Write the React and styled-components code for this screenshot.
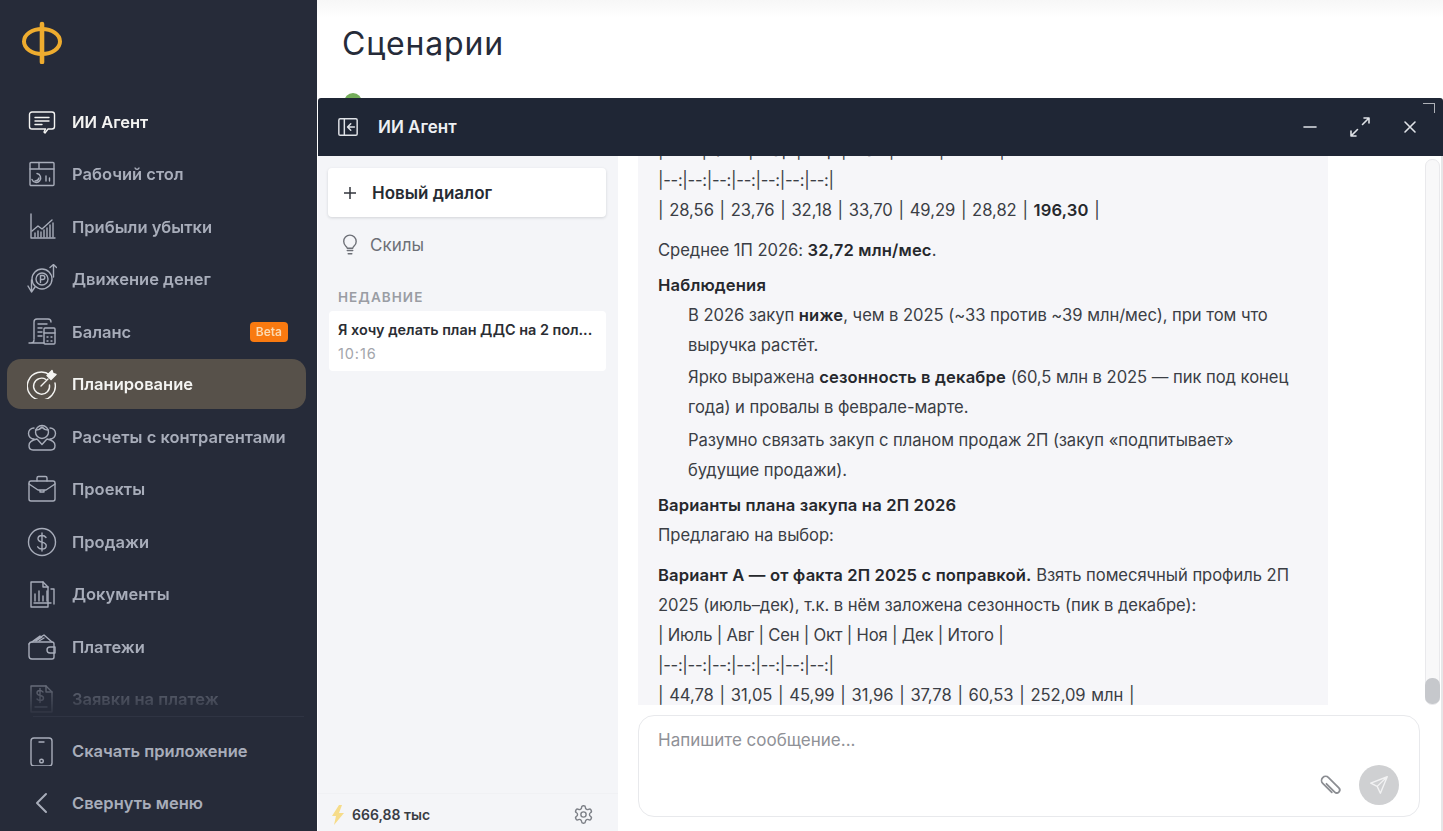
import React from 'react';
import styled, { createGlobalStyle } from 'styled-components';

const Global = createGlobalStyle`
  html, body { margin: 0; padding: 0; height: 100%; }
  body { font-family: "Inter", "Noto Sans", sans-serif; background: #fff; overflow: hidden; }
  #root { height: 100vh; }
  * { box-sizing: border-box; }
`;

const Page = styled.div`
  display: flex;
  height: 831px;
  width: 1443px;
  overflow: hidden;
`;

const Sidebar = styled.aside`
  flex: 0 0 317px;
  display: flex;
  flex-direction: column;
  background: #262b39;
  padding: 0 11px 0 7px;
`;

const LogoRow = styled.div`
  height: 95.5px;
  flex: none;
  padding: 20px 0 0 13px;
`;

const Nav = styled.nav`
  flex: 1;
  min-height: 0;
  overflow: hidden;
  display: flex;
  flex-direction: column;
  mask-image: linear-gradient(to bottom, #000 0, #000 565px, rgba(0,0,0,0.4) 595px, rgba(0,0,0,0.05) 619px);
`;

const Divider = styled.div`
  height: 1px;
  background: #2f3443;
  flex: none;
  margin: 0 2px 0 26px;
`;

const Footer = styled.div`
  flex: none;
  display: flex;
  flex-direction: column;
  padding: 7.5px 0 1.5px;
`;

const Item = styled.div`
  flex: none;
  height: 52.5px;
  display: flex;
  align-items: center;
  padding-left: 20px;
  padding-right: 18px;
  gap: 15px;
  border-radius: 14px;
  color: ${p => (p.$active ? '#f4f4f2' : '#a8adba')};
  font-size: 16.5px;
  font-weight: 600;
  white-space: nowrap;
  background: ${p => (p.$selected ? '#57514a' : 'transparent')};
  ${p => p.$selected && 'height: 50px; margin: 1px 0 1.5px;'}
`;

const NavIcon = styled.svg`
  width: 30px;
  height: 30px;
  flex: none;
  fill: none;
  stroke: currentColor;
  stroke-width: 1.4;
  stroke-linecap: round;
  stroke-linejoin: round;
`;

const Beta = styled.span`
  margin-left: auto;
  background: #f97a10;
  color: #fbd9b0;
  font-size: 12px;
  font-weight: 600;
  padding: 3px 6px;
  border-radius: 4px;
  line-height: 14px;
`;

const Main = styled.main`
  flex: 1;
  position: relative;
  min-width: 0;
  background: linear-gradient(#f7f7f7 0, #fff 18px);
  padding: 25px 0 0 25px;
`;

const Title = styled.h1`
  margin: 0;
  font-size: 32px;
  line-height: 38px;
  font-weight: 400;
  color: #262b39;
  letter-spacing: 0.8px;
`;

const GreenDot = styled.div`
  width: 18px;
  height: 18px;
  margin: 30px 0 0 2px;
  border-radius: 50%;
  background: #74ad5a;
`;

const Modal = styled.section`
  position: absolute;
  top: 98px;
  left: 1px;
  right: 0;
  bottom: 0;
  display: flex;
  flex-direction: column;
  background: #fff;
`;

const ModalHeader = styled.header`
  flex: none;
  height: 58px;
  background: #1f2635;
  border-radius: 3px 3px 0 0;
  display: flex;
  align-items: center;
  padding: 0 21px 0 19px;
  color: #eef0f3;
  position: relative;
`;

const HeaderTitle = styled.div`
  margin-left: 19px;
  font-size: 17px;
  font-weight: 600;
  flex: 1;
`;

const HeaderIcon = styled.svg`
  width: ${p => p.$size || 24}px;
  height: ${p => p.$size || 24}px;
  fill: none;
  stroke: #dfe2e7;
  stroke-width: 1.6;
  stroke-linecap: round;
  stroke-linejoin: round;
  flex: none;
`;

const HeaderActions = styled.div`
  display: flex;
  align-items: center;
  gap: 26px;
`;

const Corner = styled.span`
  position: absolute;
  top: 5px;
  right: 8px;
  width: 12px;
  height: 10px;
  border-top: 1.5px solid #aeb1b8;
  border-right: 1.5px solid #aeb1b8;
`;

const ModalBody = styled.div`
  flex: 1;
  min-height: 0;
  display: flex;
`;

const Side = styled.aside`
  flex: 0 0 300px;
  background: #f4f5f8;
  display: flex;
  flex-direction: column;
  padding: 12px 12px 0 10px;
`;

const NewDialog = styled.button`
  height: 49px;
  flex: none;
  border: 0;
  background: #fff;
  border-radius: 4px;
  box-shadow: 0 1px 3px rgba(30, 35, 50, 0.16);
  display: flex;
  align-items: center;
  gap: 15px;
  padding: 0 0 0 15px;
  font-family: inherit;
  font-size: 17px;
  font-weight: 600;
  color: #262b33;
`;

const Skills = styled.div`
  display: flex;
  align-items: center;
  gap: 9px;
  margin-top: 13px;
  height: 30px;
  padding-left: 11px;
  color: #6d7077;
  font-size: 17px;
`;

const RecentLabel = styled.div`
  margin-top: 27px;
  padding-left: 10px;
  font-size: 13.5px;
  line-height: 20px;
  font-weight: 600;
  letter-spacing: 1.05px;
  color: #9a9da4;
`;

const ChatCard = styled.div`
  margin-top: 4px;
  height: 60px;
  background: #fff;
  border-radius: 4px;
  padding: 9px 9px;
  margin-left: 1px;
`;

const ChatTitle = styled.div`
  font-size: 14.4px;
  line-height: 20px;
  font-weight: 600;
  color: #2a2d33;
  white-space: nowrap;
  overflow: hidden;
`;

const ChatTime = styled.div`
  font-size: 14.5px;
  line-height: 27px;
  letter-spacing: 0.9px;
  color: #a3a5ab;
`;

const SideFooter = styled.div`
  margin: auto -12px 0 -10px;
  height: 38px;
  border-top: 1px solid #f0f1f4;
  display: flex;
  align-items: center;
  padding: 4px 24px 0 13px;
  gap: 7px;
  font-size: 14px;
  font-weight: 600;
  color: #3a3d44;
`;

const Gear = styled.svg`
  margin-left: auto;
  width: 21px;
  height: 21px;
  fill: none;
  stroke: #7d8087;
  stroke-width: 1.6;
  stroke-linecap: round;
  stroke-linejoin: round;
`;

const Chat = styled.div`
  flex: 1;
  min-width: 0;
  position: relative;
  display: flex;
  flex-direction: column;
  padding: 0 23px 14px 20px;
`;

const Messages = styled.div`
  flex: 1;
  min-height: 0;
  overflow: hidden;
  display: flex;
  flex-direction: column;
  justify-content: flex-end;
`;

const Bubble = styled.div`
  flex: none;
  width: 690px;
  margin-bottom: -5px;
  background: #f6f6f9;
  padding: 0 20px;
  color: #3b3e45;
  font-size: 16.6px;
  line-height: 30px;
  letter-spacing: -0.05px;
`;

const Para = styled.p`
  margin: ${p => p.$top ?? 10}px 0 0;
`;

const Strong = styled.b`
  font-weight: 600;
  color: #26282d;
  letter-spacing: 0.15px;
`;

const TableRow = styled.span`
  word-spacing: 1.1px;
`;

const HeadRow = styled.span`
  letter-spacing: -0.2px;
`;

const Separator = styled.span`
  letter-spacing: -0.3px;
`;

const Indented = styled.div`
  padding-left: 30px;
  margin-top: ${p => p.$top ?? 0}px;
`;

const Composer = styled.div`
  flex: none;
  margin-top: 10px;
  height: 102px;
  border: 1px solid #e8e9ec;
  border-radius: 16px;
  position: relative;
  padding: 13px 19px;
  color: #8f9197;
  font-size: 17px;
  line-height: 22px;
`;

const Controls = styled.div`
  position: absolute;
  right: 20px;
  bottom: 11px;
  display: flex;
  align-items: center;
  gap: 14px;
`;

const SendButton = styled.div`
  width: 40px;
  height: 40px;
  border-radius: 50%;
  background: #cfd0d2;
  display: flex;
  align-items: center;
  justify-content: center;
`;

const Track = styled.div`
  position: absolute;
  top: 3px;
  bottom: 126px;
  right: 3px;
  width: 15px;
  border-radius: 7px;
  border: 1px solid #e9e9ec;
  background: #f8f8f9;
  display: flex;
  flex-direction: column;
  justify-content: flex-end;
`;

const Thumb = styled.div`
  height: 26px;
  margin: 0 -1px;
  border-radius: 7px;
  background: #c6c8cc;
`;

const Edge = styled.div`
  position: absolute;
  top: 0;
  bottom: 0;
  right: 0;
  width: 2px;
  background: #e6e6e8;
`;

const icons = {
  agent: <><path d="M5 5h20a2.5 2.5 0 0 1 2.5 2.5v12a2.5 2.5 0 0 1-2.5 2.5h-4l-3 4-1-1 1.500-3H5a2.500 2.500 0 0 1-2.500-2.500v-12A2.500 2.500 0 0 1 5 5z" /><path d="M8 10.500h14M8 14h14M8 17.500h7" /></>,
  desk: <><rect x="3" y="3.500" width="24" height="23" rx="1" /><path d="M3 10h24M12 3.500V10M10 14.500a4.500 4.500 0 1 1-5 6M19 22v-5M22.500 22v-3" /><path d="M8 22a4 4 0 0 0 4-3" /></>,
  profit: <><path d="M4 2v24h24" /><path d="M5 19l6-5 4 3 10-9" /><path d="M8 25v-4M11 25v-6M14 25v-5M17 25v-7M20 25v-9M23 25v-12M26 25V11" /></>,
  money: <><circle cx="15" cy="15" r="10" /><circle cx="15" cy="15" r="6" /><path d="M13.500 18.500v-7h2.300a2 2 0 0 1 0 4h-2.300" /><path d="M23 3.500l3.500-3 3 3M26.500 1v12M1 22l3.500 6 3.500-5M4.500 28V16" /></>,
  balance: <><path d="M7 22V5a3 3 0 0 1 3-3h11a3 3 0 0 1 3 3" /><path d="M2 26h15M4 26a3 3 0 0 0 3-3" /><path d="M11 7h9M11 11h4M11 15h4M11 19h4" /><rect x="17" y="11" width="11" height="16" rx="1" /><path d="M17 16h11M20 20h1M24 20h1M20 24h1M24 24h1" /></>,
  plan: <><path d="M23 6a14 14 0 1 0 5 8" /><path d="M19 10.500a8 8 0 1 0 3.500 5.500" /><path d="M14 17l7-7" /><path d="M20 6.500l5-5 1 3 3 1-5 5z" fill="currentColor" /></>,
  people: <><circle cx="15" cy="10" r="6.500" /><path d="M8.500 8c3 0 5-1 6.500-3 1.500 2 3.500 3 6.500 3M7 17a4.500 4.500 0 0 1 0-11M23 17a4.500 4.500 0 0 0 0-11M10 17c-5 1-8 3-8 6.500C2 26 3.500 28 6 28h18c2.500 0 4-2 4-4.500 0-3.500-3-5.500-8-6.500M10.500 17.500l4.500 5 4.500-5" /></>,
  case: <><rect x="2" y="7" width="26" height="20" rx="2" /><path d="M10 7V4a1.500 1.500 0 0 1 1.500-1.500h7A1.500 1.500 0 0 1 20 4v3M2 10l9 6h8l9-6M13 16v2h4v-2" /></>,
  dollar: <><circle cx="15" cy="15" r="13.500" /><path d="M19 10.500c-1-1.500-2.500-2-4-2-2.500 0-4 1.500-4 3.200 0 4.600 8.200 2.300 8.200 7 0 2-1.700 3.300-4.200 3.300-1.700 0-3.300-.7-4.300-2.200M15 6v18" /></>,
  docs: <><path d="M4 3h12l5 5v20H4z" /><path d="M16 3v5h5" /><path d="M8 22v-7M12 22V12M16 22v-5M7 24h17M24 10h3v15M20 12v10" /></>,
  wallet: <><path d="M5 10h20a2 2 0 0 1 2 2v13a2 2 0 0 1-2 2H5a3 3 0 0 1-3-3V12" /><path d="M2 12a3 3 0 0 1 3-2l12-7 8 7M6 9l7-5M9 9l6-4M12 9l5-3" /><path d="M28 15h-5a3 3 0 0 0 0 6h5z" /></>,
  request: <><path d="M4 2h15l6 6v20H4z" /><path d="M19 2v6h6" /><path d="M16 8c-1-1-2-1.500-3-1.500-2 0-3 1-3 2.500 0 3.500 6.500 1.500 6.500 5 0 1.500-1.300 2.500-3.300 2.500-1.200 0-2.400-.5-3.200-1.500M13 4.500v14M8 23h12" /></>,
  phone: <><rect x="4" y="2" width="21" height="28" rx="3" /><path d="M12 6h5" /><circle cx="14.500" cy="25" r="1.800" /></>,
  back: <path d="M19 6l-9 9 9 9" strokeWidth="2" />,
};

const items = [
  ['agent', 'ИИ Агент', { active: true }],
  ['desk', 'Рабочий стол'],
  ['profit', 'Прибыли убытки'],
  ['money', 'Движение денег'],
  ['balance', 'Баланс', { beta: true }],
  ['plan', 'Планирование', { active: true, selected: true }],
  ['people', 'Расчеты с контрагентами'],
  ['case', 'Проекты'],
  ['dollar', 'Продажи'],
  ['docs', 'Документы'],
  ['wallet', 'Платежи'],
  ['request', 'Заявки на платеж'],
];

function NavRow({ icon, label, active, selected, beta }) {
  return (
    <Item $active={active} $selected={selected}>
      <NavIcon viewBox="0 0 30 30">{icons[icon]}</NavIcon>
      {label}
      {beta && <Beta>Beta</Beta>}
    </Item>
  );
}

export default function App() {
  return (
    <Page>
      <Global />
      <Sidebar>
        <LogoRow>
          <svg width="44" height="44" viewBox="0 0 44 44" fill="none" stroke="#eeac2f">
            <ellipse cx="22" cy="21.500" rx="18" ry="12.500" strokeWidth="4" />
            <path d="M22 4v38" strokeWidth="4.600" strokeLinecap="round" />
          </svg>
        </LogoRow>
        <Nav>
          {items.map(([icon, label, opts]) => (
            <NavRow key={label} icon={icon} label={label} {...opts} />
          ))}
        </Nav>
        <Divider />
        <Footer>
          <NavRow icon="phone" label="Скачать приложение" />
          <NavRow icon="back" label="Свернуть меню" />
        </Footer>
      </Sidebar>
      <Main>
        <Title>Сценарии</Title>
        <GreenDot />
        <Modal>
          <ModalHeader>
            <HeaderIcon viewBox="0 0 24 24" $size={22}>
              <rect x="2" y="3" width="20" height="18" rx="1.500" />
              <path d="M8 3v18M19 12h-7M15 8.500L11.500 12l3.500 3.500" />
            </HeaderIcon>
            <HeaderTitle>ИИ Агент</HeaderTitle>
            <HeaderActions>
              <HeaderIcon viewBox="0 0 24 24"><path d="M6 12h12" /></HeaderIcon>
              <HeaderIcon viewBox="0 0 24 24">
                <path d="M14.500 9.500L21 3M16 3h5v5M9.500 14.500L3 21M3 16v5h5" />
              </HeaderIcon>
              <HeaderIcon viewBox="0 0 24 24"><path d="M7 7l10 10M17 7L7 17" /></HeaderIcon>
            </HeaderActions>
            <Corner />
          </ModalHeader>
          <ModalBody>
            <Side>
              <NewDialog>
                <svg width="14" height="14" viewBox="0 0 14 14" stroke="#33363c" strokeWidth="1.500"><path d="M7 1v12M1 7h12" /></svg>
                Новый диалог
              </NewDialog>
              <Skills>
                <svg width="22" height="22" viewBox="0 0 24 24" fill="none" stroke="#6d7077" strokeWidth="1.500" strokeLinecap="round" strokeLinejoin="round">
                  <path d="M9 18h6M10 21.500h4M15 15.500c.2-1 .9-1.800 1.700-2.600A6.800 6.800 0 1 0 7.300 13c.8.700 1.500 1.600 1.700 2.500z" />
                </svg>
                Скилы
              </Skills>
              <RecentLabel>НЕДАВНИЕ</RecentLabel>
              <ChatCard>
                <ChatTitle>Я хочу делать план ДДС на 2 пол...</ChatTitle>
                <ChatTime>10:16</ChatTime>
              </ChatCard>
              <SideFooter>
                <svg width="14" height="20" viewBox="0 0 14 20" fill="#f6dc8a"><path d="M8 0L1 11h4l-2 9 10-12H8l3-8z" /></svg>
                666,88 тыс
                <Gear viewBox="0 0 24 24">
                  <path d="M12.220 2h-.440a2 2 0 0 0-2 2v.180a2 2 0 0 1-1 1.730l-.430.250a2 2 0 0 1-2 0l-.150-.080a2 2 0 0 0-2.730.730l-.220.380a2 2 0 0 0 .730 2.730l.150.100a2 2 0 0 1 1 1.720v.510a2 2 0 0 1-1 1.740l-.150.090a2 2 0 0 0-.730 2.730l.220.380a2 2 0 0 0 2.730.730l.150-.080a2 2 0 0 1 2 0l.430.250a2 2 0 0 1 1 1.730V20a2 2 0 0 0 2 2h.440a2 2 0 0 0 2-2v-.180a2 2 0 0 1 1-1.730l.430-.250a2 2 0 0 1 2 0l.150.080a2 2 0 0 0 2.730-.730l.220-.390a2 2 0 0 0-.730-2.730l-.150-.080a2 2 0 0 1-1-1.740v-.500a2 2 0 0 1 1-1.740l.150-.090a2 2 0 0 0 .730-2.730l-.220-.380a2 2 0 0 0-2.730-.730l-.150.080a2 2 0 0 1-2 0l-.430-.250a2 2 0 0 1-1-1.730V4a2 2 0 0 0-2-2z" />
                  <circle cx="12" cy="12" r="3" />
                </Gear>
              </SideFooter>
            </Side>
            <Chat>
              <Messages>
                <Bubble>
                  <Para $top={0}>
                    <HeadRow>| Янв | Фев | Мар | Апр | Май | Июн | Итого |</HeadRow><br />
                    <Separator>|--:|--:|--:|--:|--:|--:|--:|</Separator><br />
                    <TableRow>| 28,56 | 23,76 | 32,18 | 33,70 | 49,29 | 28,82 | <Strong>196,30</Strong> |</TableRow>
                  </Para>
                  <Para>Среднее 1П 2026: <Strong>32,72 млн/мес</Strong>.</Para>
                  <Para $top={5}><Strong>Наблюдения</Strong></Para>
                  <Indented>В 2026 закуп <Strong>ниже</Strong>, чем в 2025 (~33 против ~39 млн/мес), при том что выручка растёт.</Indented>
                  <Indented $top={2}>Ярко выражена <Strong>сезонность в декабре</Strong> (60,5 млн в 2025 — пик под конец года) и провалы в феврале-марте.</Indented>
                  <Indented $top={3}>Разумно связать закуп с планом продаж 2П (закуп «подпитывает»<br />будущие продажи).</Indented>
                  <Para $top={5}><Strong>Варианты плана закупа на 2П 2026</Strong></Para>
                  <Para $top={0}>Предлагаю на выбор:</Para>
                  <Para>
                    <Strong>Вариант А — от факта 2П 2025 с поправкой.</Strong> Взять помесячный профиль 2П 2025 (июль–дек), т.к. в нём заложена сезонность (пик в декабре):<br />
                    <HeadRow>| Июль | Авг | Сен | Окт | Ноя | Дек | Итого |</HeadRow><br />
                    <Separator>|--:|--:|--:|--:|--:|--:|--:|</Separator><br />
                    <TableRow>| 44,78 | 31,05 | 45,99 | 31,96 | 37,78 | 60,53 | 252,09 млн |</TableRow>
                  </Para>
                </Bubble>
              </Messages>
              <Composer>
                Напишите сообщение...
                <Controls>
                  <svg width="28" height="28" viewBox="0 0 24 24" fill="none" stroke="#8b8d92" strokeWidth="1.500" strokeLinecap="round">
                    <path d="M7.500 14.500h10a2.500 2.500 0 0 0 0-5H5a3.500 3.500 0 0 0 0 7h11" transform="rotate(45 12 12) translate(1 -0.500)" />
                  </svg>
                  <SendButton>
                    <svg width="22" height="22" viewBox="0 0 24 24" fill="none" stroke="#f2f2f3" strokeWidth="1.500" strokeLinejoin="round">
                      <path d="M21 3L3 10l7 3.500L13.500 21zM10 13.500L21 3" />
                    </svg>
                  </SendButton>
                </Controls>
              </Composer>
              <Track><Thumb /></Track>
              <Edge />
            </Chat>
          </ModalBody>
        </Modal>
      </Main>
    </Page>
  );
}
